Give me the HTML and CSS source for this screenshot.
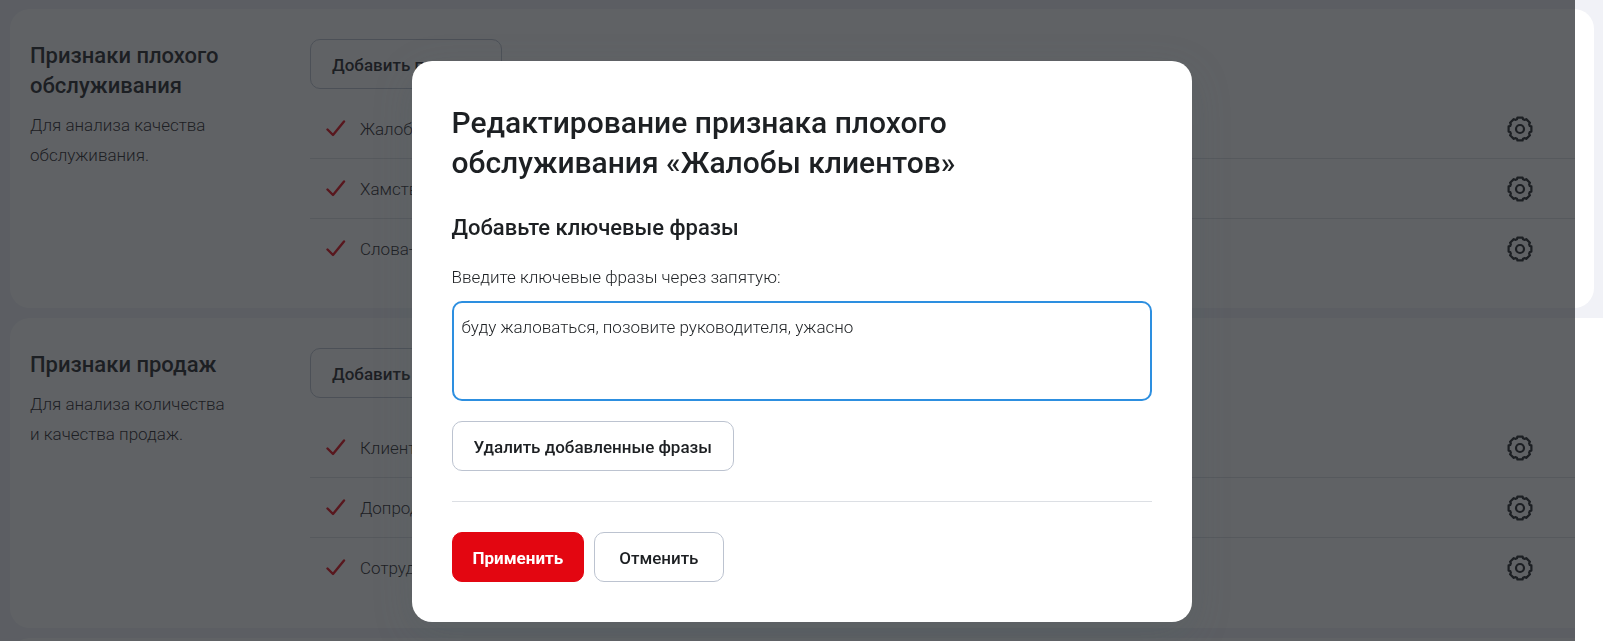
FILE: index.html
```
<!DOCTYPE html>
<html lang="ru">
<head>
    <meta charset="UTF-8">
    <meta name="viewport" content="width=device-width, initial-scale=1.0">
    <title>Признаки</title>
    <link rel="stylesheet" href="styles.css">
</head>
<body>
    <svg class="sprite" aria-hidden="true">
        <symbol id="check" viewBox="0 0 20 17">
            <path d="M1.5 9.5 L7 15 L18 1.5" fill="none" stroke="currentColor" stroke-width="2.4" stroke-linecap="round" stroke-linejoin="round"/>
        </symbol>
        <symbol id="gear" viewBox="0 0 26 26">
            <g fill="none" stroke="currentColor" stroke-width="2.2" stroke-linejoin="round">
                <path d="M10 3.2 10.4 1.6H15.6L16 3.2 17.8 3.9 19.2 3.1 22.9 6.8 22.1 8.2 22.8 10 24.4 10.4V15.6L22.8 16 22.1 17.8 22.9 19.2 19.2 22.9 17.8 22.1 16 22.8 15.6 24.4H10.4L10 22.8 8.2 22.1 6.8 22.9 3.1 19.2 3.9 17.8 3.2 16 1.6 15.6V10.4L3.2 10 3.9 8.2 3.1 6.8 6.8 3.1 8.2 3.9Z"/>
                <circle cx="13" cy="13" r="4"/>
            </g>
        </symbol>
    </svg>

    <main class="page">
        <div class="section section-wide">
            <section class="card">
                <div class="info">
                    <h2>Признаки плохого обслуживания</h2>
                    <p>Для анализа качества обслуживания.</p>
                </div>
                <div class="signs">
                    <button type="button" class="btn">Добавить признак</button>
                    <ul class="list">
                        <li><svg class="check"><use href="#check"/></svg><span>Жалобы клиентов</span><button type="button" class="settings" aria-label="Настроить"><svg><use href="#gear"/></svg></button></li>
                        <li><svg class="check"><use href="#check"/></svg><span>Хамство</span><button type="button" class="settings" aria-label="Настроить"><svg><use href="#gear"/></svg></button></li>
                        <li><svg class="check"><use href="#check"/></svg><span>Слова-паразиты</span><button type="button" class="settings" aria-label="Настроить"><svg><use href="#gear"/></svg></button></li>
                    </ul>
                </div>
            </section>
        </div>
        <div class="section">
            <section class="card">
                <div class="info">
                    <h2>Признаки продаж</h2>
                    <p>Для анализа количества и&nbsp;качества продаж.</p>
                </div>
                <div class="signs signs-spaced">
                    <button type="button" class="btn">Добавить признак</button>
                    <ul class="list">
                        <li><svg class="check"><use href="#check"/></svg><span>Клиент купил</span><button type="button" class="settings" aria-label="Настроить"><svg><use href="#gear"/></svg></button></li>
                        <li><svg class="check"><use href="#check"/></svg><span>Допродажа</span><button type="button" class="settings" aria-label="Настроить"><svg><use href="#gear"/></svg></button></li>
                        <li><svg class="check"><use href="#check"/></svg><span>Сотрудник</span><button type="button" class="settings" aria-label="Настроить"><svg><use href="#gear"/></svg></button></li>
                    </ul>
                </div>
            </section>
            <section class="card"></section>
        </div>
    </main>

    <div class="backdrop"></div>
    <div class="modal-wrap">
        <form class="modal" role="dialog" aria-modal="true" aria-labelledby="modalTitle">
            <h1 id="modalTitle">Редактирование признака плохого обслуживания «Жалобы клиентов»</h1>
            <h3>Добавьте ключевые фразы</h3>
            <label for="phrases">Введите ключевые фразы через запятую:</label>
            <textarea id="phrases" spellcheck="false">буду жаловаться, позовите руководителя, ужасно</textarea>
            <button type="button" class="btn">Удалить добавленные фразы</button>
            <hr>
            <div class="actions">
                <button type="submit" class="btn btn-primary">Применить</button>
                <button type="button" class="btn btn-cancel">Отменить</button>
            </div>
        </form>
    </div>
</body>
</html>
```

FILE: styles.css
```
* {
    box-sizing: border-box;
}
body {
    margin: 0;
    background: #fff;
    color: #1d2023;
    font-family: Roboto, "Liberation Sans", sans-serif;
    font-size: 17px;
    font-weight: 300;
    line-height: 30px;
}
h1, h2, h3, p, ul {
    margin: 0;
}
.sprite {
    display: none;
}
.page {
    height: 100vh;
    overflow: hidden;
}
.section {
    margin-right: 28px;
    padding-left: 10px;
    overflow: hidden;
    background: #f1f2f7;
}
.section-wide {
    margin-right: 0;
    padding: 9px 9px 10px 10px;
}
.card {
    display: flex;
    min-height: 200px;
    margin: 0 -19px 10px 0;
    padding: 30px 19px 30px 20px;
    background: #fff;
    border-radius: 20px;
}
.section-wide .card {
    margin: 0;
}
.info {
    width: 280px;
    padding-right: 60px;
}
.info h2 {
    padding-top: 2px;
    margin-bottom: 9px;
    font-size: 22px;
    font-weight: 500;
}
.signs {
    flex: 1;
}
.signs-spaced {
    padding-bottom: 1px;
}
.list {
    padding: 0;
    margin-top: 10px;
    list-style: none;
}
.signs-spaced .list {
    margin-top: 20px;
}
.list li {
    display: flex;
    align-items: center;
    height: 60px;
    padding: 0 42px 0 16px;
    border-bottom: 1px solid #dcdfe4;
}
.list li:last-child {
    height: 59px;
    border-bottom: none;
}
.check {
    width: 20px;
    height: 17px;
    margin-right: 14px;
    color: #e30611;
}
.settings {
    width: 26px;
    height: 26px;
    margin-left: auto;
    padding: 0;
    border: none;
    background: none;
    color: #1d2023;
    cursor: pointer;
}
.settings svg {
    display: block;
    width: 26px;
    height: 26px;
}
.btn {
    display: block;
    height: 50px;
    padding: 2px 21px 0;
    border: 1px solid #bcc3d0;
    border-radius: 10px;
    background: #fff;
    color: #1d2023;
    font-family: inherit;
    font-size: 17px;
    font-weight: 500;
    cursor: pointer;
}
.backdrop {
    position: fixed;
    inset: 0 28px 0 0;
    background: rgba(29, 32, 35, 0.7);
}
.modal-wrap {
    position: fixed;
    inset: 0;
    display: flex;
    justify-content: center;
    align-items: flex-start;
    padding-top: 61px;
}
.modal {
    width: 780px;
    max-width: 100%;
    padding: 42px 40px 40px;
    border-radius: 20px;
    background: #fff;
    box-shadow: 0 12px 40px rgba(70, 90, 95, 0.2);
}
.modal h1 {
    margin-bottom: 30px;
    font-size: 30px;
    font-weight: 500;
    line-height: 40px;
}
.modal h3 {
    margin-bottom: 19px;
    font-size: 22px;
    font-weight: 500;
}
.modal label {
    display: block;
    margin-bottom: 9px;
}
.modal textarea {
    display: block;
    width: 100%;
    height: 100px;
    margin-bottom: 20px;
    padding: 9px 8px;
    border: 2px solid #2d8fe0;
    border-radius: 10px;
    outline: none;
    background: #fff;
    color: #1d2023;
    font: inherit;
    resize: none;
}
.modal hr {
    margin: 30px 0;
    border: none;
    border-top: 1px solid #dcdfe4;
}
.actions {
    display: flex;
    gap: 10px;
}
.btn-primary {
    padding: 2px 20px 0;
    border-color: #e30611;
    background: #e30611;
    color: #fff;
    font-weight: 700;
}
.btn-cancel {
    padding: 2px 24px 0;
}
```
